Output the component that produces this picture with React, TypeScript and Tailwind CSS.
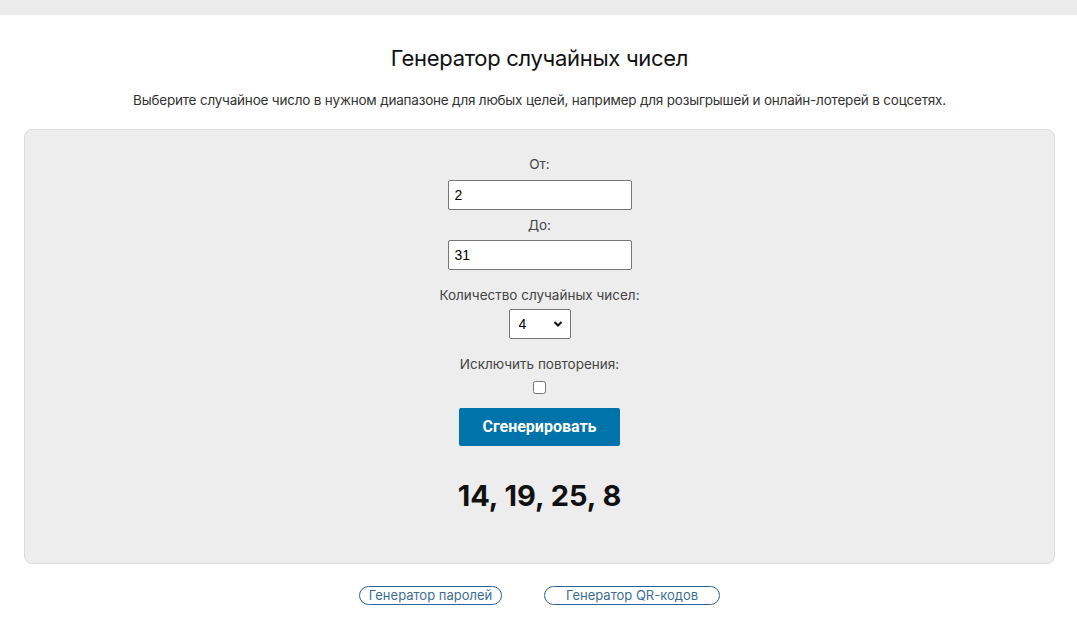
import React, { useState } from 'react';

const font = { fontFamily: 'Inter, "Noto Sans", sans-serif' };
const arial = { fontFamily: '"Liberation Sans", Arial, sans-serif' };

export default function App() {
  const [from, setFrom] = useState('2');
  const [to, setTo] = useState('31');
  const [count, setCount] = useState('4');
  const [unique, setUnique] = useState(false);

  return (
    <div className="min-h-screen bg-white text-[#222]" style={font}>
      <div className="h-[15px] bg-[#ececec]" />
      <main className="pl-6 pr-[22px]">
        <h1 className="mt-[28px] text-center text-[22px] font-normal leading-[30px] text-[#111] tracking-[-0.3px]">
          Генератор случайных чисел
        </h1>
        <p className="mt-[17px] text-center text-[13.5px] leading-[20px] text-[#333] tracking-[-0.2px]">
          Выберите случайное число в нужном диапазоне для любых целей, например для розыгрышей и онлайн-лотерей в соцсетях.
        </p>
        <section className="mt-[19px] flex h-[435px] flex-col items-center rounded-lg border border-[#dcdcdc] bg-[#ededed] pt-[24px]">
          <label className="text-[13.5px] leading-[20px] text-[#444]">От:</label>
          <input
            value={from}
            onChange={(e) => setFrom(e.target.value)}
            className="mt-[6px] h-[30px] w-[184px] rounded-[2px] border border-[#767676] bg-white px-[6px] text-[14px] text-black"
            style={arial}
          />
          <label className="mt-[5px] text-[13.5px] leading-[20px] text-[#444]">До:</label>
          <input
            value={to}
            onChange={(e) => setTo(e.target.value)}
            className="mt-[5px] h-[30px] w-[184px] rounded-[2px] border border-[#767676] bg-white px-[6px] text-[14px] text-black"
            style={arial}
          />
          <label className="mt-[15px] text-[13.5px] leading-[20px] text-[#444]">Количество случайных чисел:</label>
          <div className="relative mt-[4px] h-[30px] w-[62px]">
            <select
              value={count}
              onChange={(e) => setCount(e.target.value)}
              className="h-full w-full appearance-none rounded-[2px] border border-[#767676] bg-white pl-[9px] text-[14px] text-black"
              style={arial}
            >
              {[1, 2, 3, 4, 5, 6, 7, 8, 9, 10].map((n) => (
                <option key={n} value={n}>{n}</option>
              ))}
            </select>
            <svg className="pointer-events-none absolute right-[8px] top-[11px]" width="10" height="8" viewBox="0 0 10 8">
              <path d="M1.5 2 L5 5.5 L8.5 2" fill="none" stroke="#111" strokeWidth="2" />
            </svg>
          </div>
          <label className="mt-[15px] text-[13.5px] leading-[20px] text-[#444]">Исключить повторения:</label>
          <input
            type="checkbox"
            checked={unique}
            onChange={(e) => setUnique(e.target.checked)}
            className="mt-[7px] h-[13px] w-[13px]"
          />
          <button
            type="button"
            className="mt-[14px] h-[38px] w-[161px] rounded-[2px] bg-[#0073aa] text-[16px] font-bold text-white"
            style={{ fontFamily: 'Roboto, "Liberation Sans", Arial, sans-serif' }}
          >
            Сгенерировать
          </button>
          <div className="mt-[32px] text-[29px] font-bold leading-[36px] text-[#111]">14, 19, 25, 8</div>
        </section>
        <nav className="mt-[22px] flex justify-center gap-[42px]">
          <a className="flex h-[19px] w-[143px] items-center justify-center rounded-full border border-[#2a6496] text-[13px] text-[#3d6e93]">
            Генератор паролей
          </a>
          <a className="flex h-[19px] w-[176px] items-center justify-center rounded-full border border-[#2a6496] text-[13px] text-[#3d6e93]">
            Генератор QR-кодов
          </a>
        </nav>
      </main>
    </div>
  );
}
